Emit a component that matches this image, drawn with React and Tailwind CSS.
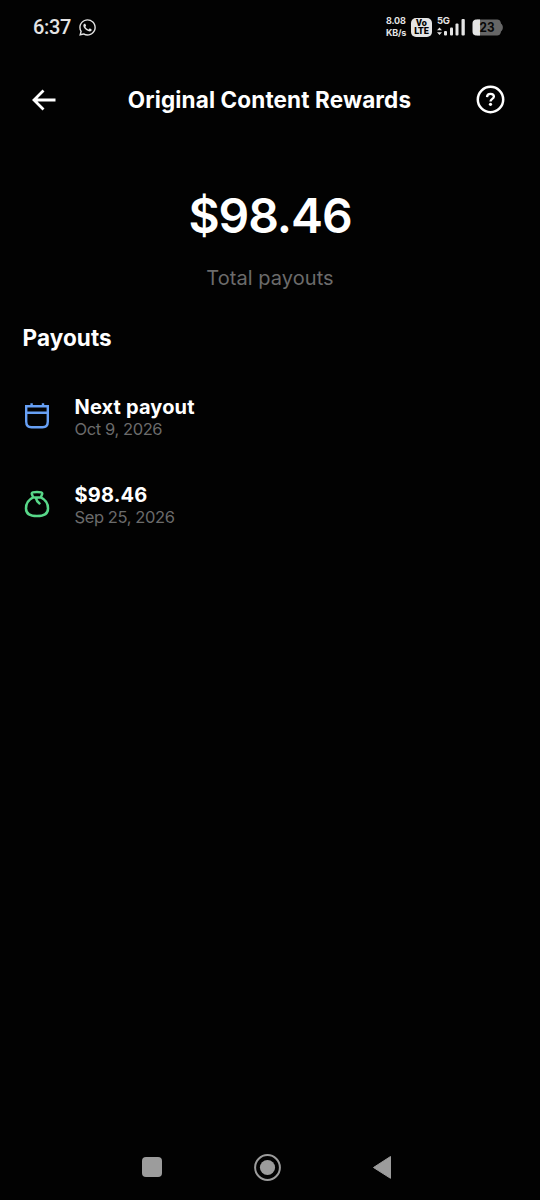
import React from 'react';
import { FaWhatsapp } from 'react-icons/fa';

const StatusBar = () => (
  <div className="flex h-[54px] items-center justify-between pl-[33px] pr-9 text-[#e4e4e4]">
    <div className="flex items-center gap-[7px]">
      <span className="font-['Roboto',sans-serif] text-[20px] font-medium leading-6 tracking-[-0.3px]">6:37</span>
      <FaWhatsapp className="h-[19px] w-[19px]" />
    </div>
    <div className="flex items-center">
      <div className="w-[25px] text-[9px] font-bold leading-[12px] tracking-[-0.2px]">
        <div>8.08</div>
        <div>KB/s</div>
      </div>
      <div className="flex h-[19px] w-[21px] flex-col items-center justify-center rounded-[5px] bg-[#e4e4e4] font-['Roboto',sans-serif] text-[9px] font-black leading-[8px] text-black">
        <span className="h-2">Vo</span>
        <span className="h-2">LTE</span>
      </div>
      <svg className="ml-[5px] h-6 w-[29px]" viewBox="0 -2 29 24" fill="currentColor">
        <text x="0" y="7" fontSize="9.5" fontWeight="700" textLength="13">5G</text>
        <path d="M0 13.3L2.5 10.5L5 13.3ZM0 15.2H5L2.5 18Z" />
        <rect x="7" y="14" width="3" height="4.5" rx="1" />
        <rect x="13" y="10.5" width="3" height="8" rx="1" />
        <rect x="18.5" y="6.5" width="3" height="12" rx="1" />
        <rect x="24.5" y="2" width="3.3" height="16.5" rx="1" />
      </svg>
      <svg className="ml-[6px] h-[17px] w-8" viewBox="0 0 32 17">
        <path d="M5 0.5H24C28 0.5 28.5 2 29 4.5C31.5 6 31.5 11 29 12.5C28.5 15 28 16.5 24 16.5H5Z" fill="#666" />
        <path d="M8 0.5H5C1.5 0.5 0.5 2 0.5 5V12C0.5 15 1.5 16.5 5 16.5H8Z" fill="#e4e4e4" />
        <text x="7.5" y="13" fontSize="13" fontWeight="700" fill="#080808" textLength="15" lengthAdjust="spacingAndGlyphs">23</text>
      </svg>
    </div>
  </div>
);

const Header = () => (
  <header className="flex h-[91px] items-center justify-between pl-[31px] pr-[35px]">
    <button aria-label="Back">
      <svg className="h-6 w-[26px]" viewBox="0 0 26 24" fill="none" stroke="currentColor" strokeWidth="2.8">
        <path d="M12.5 2.5L3 12L12.5 21.5M3 12H24.5" />
      </svg>
    </button>
    <h1 className="ml-[6px] whitespace-nowrap text-[22.5px] font-bold tracking-[0.13px]">Original Content Rewards</h1>
    <button aria-label="Help">
      <svg className="h-[29px] w-[29px]" viewBox="0 0 29 29" fill="none" stroke="currentColor">
        <circle cx="14.5" cy="14.5" r="12.7" strokeWidth="2.5" />
        <path d="M11 12.1C11.1 10 12.4 8.8 14.5 8.8C16.6 8.8 17.9 9.9 17.9 11.6C17.9 14 14.5 13.9 14.5 16.6" strokeWidth="2.3" />
        <circle cx="14.5" cy="19.3" r="1.6" fill="currentColor" stroke="none" />
      </svg>
    </button>
  </header>
);

const CalendarIcon = () => (
  <svg className="mb-[3px] h-7 w-7" viewBox="0 0 28 28" fill="none" stroke="#67a0f5" strokeWidth="2.4">
    <path d="M3.2 4.2H24.8V19.5C24.8 23.5 22.5 25.2 19.5 25.2H8.5C5.5 25.2 3.2 23.5 3.2 19.5ZM3.2 10.8H24.8M8.6 1.2V5M20 1.2V5" />
  </svg>
);

const MoneyBagIcon = () => (
  <svg className="mb-[3px] h-7 w-7" viewBox="0 0 28 28" fill="none" stroke="#58d889" strokeWidth="2.5" strokeLinecap="round" strokeLinejoin="round">
    <path d="M10.2 7.4L8.9 4.2C8.2 2.2 10.5 2.1 14 2.1S19.8 2.2 19.1 4.2L17.8 7.4ZM10.2 7.4C5.5 9.7 3 14.2 3 18.4C3 23.5 7 26 14 26S25 23.5 25 18.4C25 14.2 22.5 9.7 17.8 7.4M12.8 7.8C13.2 10.2 14.5 12 16.5 13.4" />
  </svg>
);

const PayoutRow = ({ icon, title, date }) => (
  <li className="flex h-[88px] items-center gap-6">
    {icon}
    <div>
      <div className="text-[20px] font-bold leading-6 tracking-[0.15px]">{title}</div>
      <div className="text-[16.5px] leading-5 tracking-[-0.4px] text-[#6b6b6b]">{date}</div>
    </div>
  </li>
);

const NavigationBar = () => (
  <nav className="flex h-[66px] items-center pl-[142px] text-[#9c9c9c]">
    <div className="h-5 w-5 rounded-[4px] bg-current" />
    <svg className="ml-[91px] h-7 w-7" viewBox="0 0 28 28" fill="currentColor">
      <circle cx="14.5" cy="14.5" r="12.4" fill="none" stroke="currentColor" strokeWidth="2" />
      <circle cx="14.5" cy="14.5" r="7.6" />
    </svg>
    <svg className="ml-[91px] h-6 w-5" viewBox="0 0 20 24" fill="currentColor" stroke="currentColor" strokeLinejoin="round">
      <path d="M1.5 12.5L18.5 1.5V23.3Z" />
    </svg>
  </nav>
);

export default function App() {
  return (
    <div className="flex h-[1200px] w-[540px] flex-col overflow-hidden bg-[#020202] font-['Inter',sans-serif] text-white">
      <StatusBar />
      <Header />
      <main className="flex-1">
        <section className="flex flex-col items-center pt-10">
          <div className="text-[48px] font-semibold leading-[62px] tracking-[-1.1px]">$98.46</div>
          <div className="mt-4 text-[20px] leading-[30px] tracking-[0.06px] text-[#6b6b6b]">Total payouts</div>
        </section>
        <section className="pl-[22.5px] pt-[29px]">
          <h2 className="text-[22.5px] font-bold leading-[32px] tracking-[0.1px]">Payouts</h2>
          <ul className="mt-[19px]">
            <PayoutRow icon={<CalendarIcon />} title="Next payout" date="Oct 9, 2026" />
            <PayoutRow icon={<MoneyBagIcon />} title="$98.46" date="Sep 25, 2026" />
          </ul>
        </section>
      </main>
      <NavigationBar />
    </div>
  );
}
